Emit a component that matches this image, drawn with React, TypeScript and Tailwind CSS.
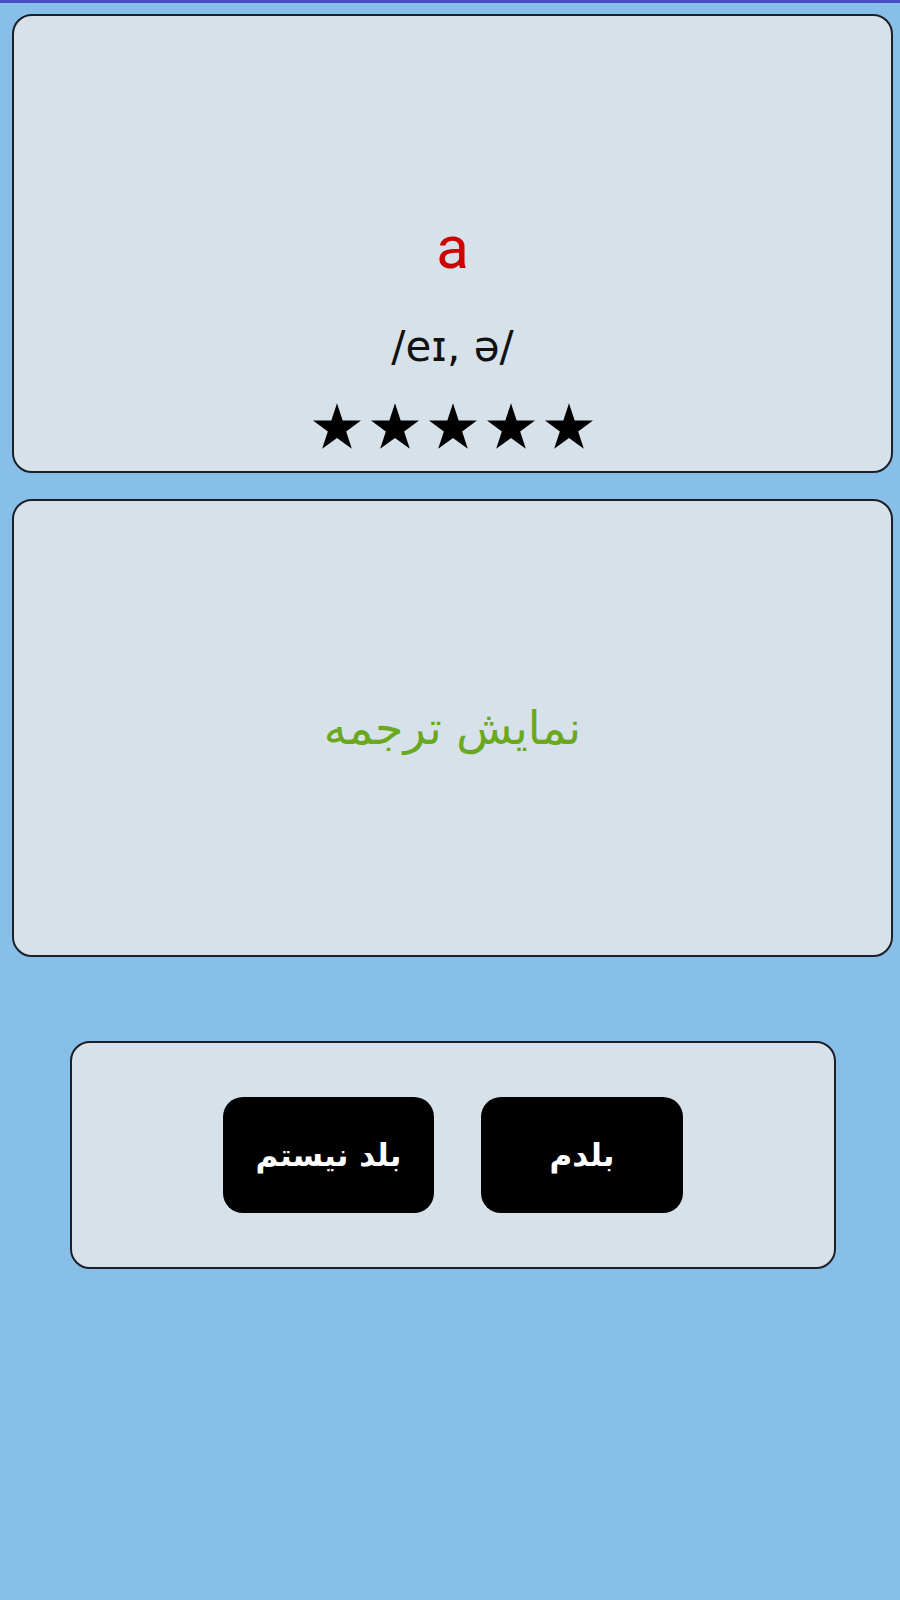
import React from 'react';

function Star() {
  return (
    <svg viewBox="0 0 24 22.83" className="w-[48px] h-[46px]" fill="#000">
      <path d="M12 0L14.83 8.72H24L16.58 14.11L19.42 22.83L12 17.44L4.58 22.83L7.42 14.11L0 8.72H9.17Z" />
    </svg>
  );
}

export default function App() {
  return (
    <div className="min-h-[1600px] bg-[#87bfe8] border-t-[3px] border-[#4a4fc8] font-['Roboto','Liberation_Sans',sans-serif]">
      {/* word card */}
      <div className="ml-[12px] mr-[7px] mt-[11px] h-[459px] rounded-[20px] border-2 border-[#1c1f26] bg-[#d6e1ea] flex flex-col items-center pt-[202px]">
        <div className="text-[60px] leading-none text-[#cc0000]">a</div>
        <div className="mt-[48px] text-[42px] leading-none text-[#111] font-['DejaVu_Sans',sans-serif]">/eɪ, ə/</div>
        <div className="mt-[35px] flex gap-[10px]">
          <Star />
          <Star />
          <Star />
          <Star />
          <Star />
        </div>
      </div>

      {/* translation card */}
      <div className="ml-[12px] mr-[7px] mt-[26px] h-[458px] rounded-[20px] border-2 border-[#1c1f26] bg-[#d6e1ea] flex items-center justify-center">
        <div dir="rtl" className="text-[46px] text-[#6aa81e] font-['DejaVu_Sans',sans-serif]">
          نمایش ترجمه
        </div>
      </div>

      {/* buttons */}
      <div className="ml-[70px] w-[766px] mt-[84px] h-[228px] rounded-[20px] border-2 border-[#1c1f26] bg-[#d6e1ea] flex items-center justify-center">
        <div dir="rtl" className="flex gap-[47px] font-['DejaVu_Sans',sans-serif]">
          <button className="w-[202px] h-[116px] rounded-[20px] bg-black text-white text-[31px] font-bold">
            بلدم
          </button>
          <button className="w-[211px] h-[116px] rounded-[20px] bg-black text-white text-[31px] font-bold">
            بلد نیستم
          </button>
        </div>
      </div>
    </div>
  );
}
